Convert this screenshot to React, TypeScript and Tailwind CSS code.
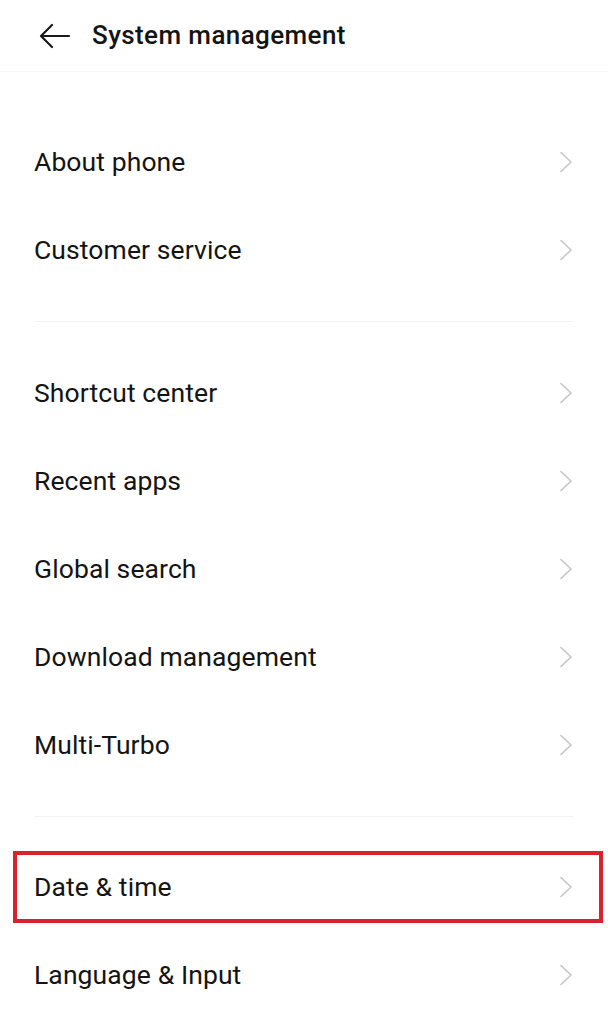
import { ReactNode } from 'react';

const font = { fontFamily: 'Roboto, "Noto Sans", Arial, sans-serif' };

const Chevron = () => (
  <svg width="14" height="22" viewBox="0 0 14 22" fill="none" className="shrink-0">
    <path d="M2 1.5 L12 11 L2 20.5" stroke="#c6c6c6" strokeWidth="1.6" strokeLinecap="round" strokeLinejoin="round" />
  </svg>
);

const Row = ({ label, children }: { label: string; children?: ReactNode }) => (
  <div className="relative h-[88px] flex items-center justify-between pl-[34px] pr-[35px]">
    <span className="text-[26.5px] text-[#141414] tracking-[0.1px]">{label}</span>
    <Chevron />
    {children}
  </div>
);

const Divider = () => <div className="mx-[35px] h-px bg-[#f2f2f2]" />;

const App = () => {
  return (
    <div className="w-[608px] h-[1024px] bg-white overflow-hidden" style={font}>
      <header className="h-[72px] flex items-center pl-[39px] border-b border-[#f7f7f7]">
        <svg width="32" height="26" viewBox="0 0 32 26" fill="none">
          <path d="M30 13 H2.5 M13 2 L2 13 L13 24" stroke="#1a1a1a" strokeWidth="2.2" strokeLinecap="round" strokeLinejoin="round" />
        </svg>
        <h1 className="ml-[21px] text-[26px] font-medium text-[#141414] tracking-[0.4px]">System management</h1>
      </header>

      <div className="pt-[46px]">
        <Row label="About phone" />
        <Row label="Customer service" />
      </div>

      <div className="py-[27px]">
        <Divider />
      </div>

      <div>
        <Row label="Shortcut center" />
        <Row label="Recent apps" />
        <Row label="Global search" />
        <Row label="Download management" />
        <Row label="Multi-Turbo" />
      </div>

      <div className="pt-[27px] pb-[26px]">
        <Divider />
      </div>

      <div>
        <Row label="Date & time">
          <div className="absolute left-[13px] right-[5px] top-[8px] bottom-[8px] border-4 border-[#d8222e] pointer-events-none" />
        </Row>
        <Row label="Language & Input" />
      </div>
    </div>
  );
};

export default App;
